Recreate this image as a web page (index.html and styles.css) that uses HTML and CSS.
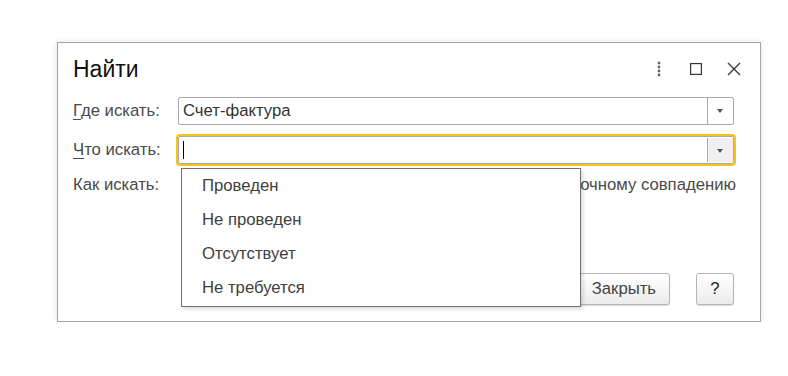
FILE: index.html
```html
<!DOCTYPE html>
<html lang="ru">
<head>
<meta charset="UTF-8">
<title>Найти</title>
<link rel="stylesheet" href="styles.css">
</head>
<body>

<div class="window">
    <div class="titlebar">
        <h1>Найти</h1>
        <div class="tools">
            <svg width="6" height="16" viewBox="0 0 6 16"><circle cx="3" cy="2" r="1.4" fill="#666"/><circle cx="3" cy="6" r="1.4" fill="#666"/><circle cx="3" cy="10" r="1.4" fill="#666"/><circle cx="3" cy="14" r="1.4" fill="#666"/></svg>
            <svg width="12" height="12" viewBox="0 0 12 12"><rect x="0.6" y="0.6" width="10.8" height="10.8" fill="none" stroke="#333" stroke-width="1.2"/></svg>
            <svg width="16" height="16" viewBox="0 0 16 16"><path d="M2 2 L14 14 M14 2 L2 14" stroke="#333" stroke-width="1.3"/></svg>
        </div>
    </div>

    <div class="form">
        <label><u>Г</u>де искать:</label>
        <div class="field">
            <span class="value">Счет-фактура</span>
            <span class="drop"></span>
        </div>

        <label><u>Ч</u>то искать:</label>
        <div class="field focused">
            <span class="value"><span class="caret"></span></span>
            <span class="drop"></span>
        </div>

        <label class="top">Как искать:</label>
        <div class="modes">по точному совпадению</div>
    </div>

    <div class="buttons">
        <button type="button" class="btn">Найти</button>
        <button type="button" class="btn">Закрыть</button>
        <button type="button" class="btn help">?</button>
    </div>

    <ul class="list">
        <li>Проведен</li>
        <li>Не проведен</li>
        <li>Отсутствует</li>
        <li>Не требуется</li>
    </ul>
</div>

</body>
</html>
```

FILE: styles.css
```css
body {
    margin: 0;
    background-color: #fff;
    font-family: "Liberation Sans", Arial, sans-serif;
    color: #4a4a4a;
}

.window {
    position: relative;
    box-sizing: border-box;
    width: 704px;
    height: 280px;
    margin: 42px 0 0 57px;
    border: 1px solid #a6a6a6;
    background-color: #fff;
    box-shadow: 0 0 6px rgba(0, 0, 0, 0.12);
}

.titlebar {
    display: flex;
    align-items: center;
    justify-content: space-between;
    height: 52px;
    padding: 0 18px 0 15px;
}

h1 {
    margin: 0;
    font-size: 23px;
    font-weight: normal;
    color: #111;
}

.tools {
    display: flex;
    align-items: center;
}

.tools svg:nth-child(1) {
    margin-right: 28px;
}

.tools svg:nth-child(2) {
    margin-right: 24px;
}

.form {
    display: grid;
    grid-template-columns: 105px 556px;
    align-items: center;
    row-gap: 11px;
    padding: 2px 0 0 15px;
    font-size: 16.7px;
}

label u {
    text-decoration-thickness: 1px;
    text-underline-offset: 3px;
}

.field {
    display: flex;
    box-sizing: border-box;
    height: 28px;
    border: 1px solid #a9a9a9;
    border-radius: 2px;
    color: #333;
}

.field .value {
    flex: 1;
    display: flex;
    align-items: center;
    padding-left: 4px;
}

.field .drop {
    width: 25px;
    border-left: 1px solid #a9a9a9;
    position: relative;
}

.field .drop::after {
    content: "";
    position: absolute;
    left: 9px;
    top: 11px;
    border-left: 3.5px solid transparent;
    border-right: 3.5px solid transparent;
    border-top: 4px solid #555;
}

.field.focused {
    outline: 2px solid #f5c518;
    outline-offset: 0;
}

.field.focused .drop {
    background-color: #f0f0f0;
    margin: 1px 0;
}

.caret {
    display: inline-block;
    width: 1px;
    height: 18px;
    background-color: #000;
}

.top {
    align-self: start;
}

.modes {
    align-self: start;
    text-align: right;
    margin-right: -2px;
}

.buttons {
    display: flex;
    justify-content: flex-end;
    gap: 26px;
    margin-top: 78px;
    padding-right: 26px;
}

.btn {
    box-sizing: border-box;
    height: 32px;
    padding: 0 13px;
    border: 1px solid #b5b5b5;
    border-radius: 3px;
    background: linear-gradient(#fff, #ececec);
    box-shadow: 0 1px 1px rgba(0, 0, 0, 0.15);
    font-family: inherit;
    font-size: 16.7px;
    color: #444;
}

.btn.help {
    width: 38px;
    padding: 0;
    color: #222;
}

.list {
    position: absolute;
    left: 123px;
    top: 125px;
    box-sizing: border-box;
    width: 400px;
    height: 139px;
    margin: 0;
    padding: 0;
    list-style: none;
    border: 1px solid #707070;
    background-color: #fff;
    box-shadow: 2px 2px 4px rgba(0, 0, 0, 0.15);
    font-size: 16.7px;
    color: #404040;
}

.list li {
    height: 34px;
    line-height: 34px;
    padding-left: 20px;
}
```
